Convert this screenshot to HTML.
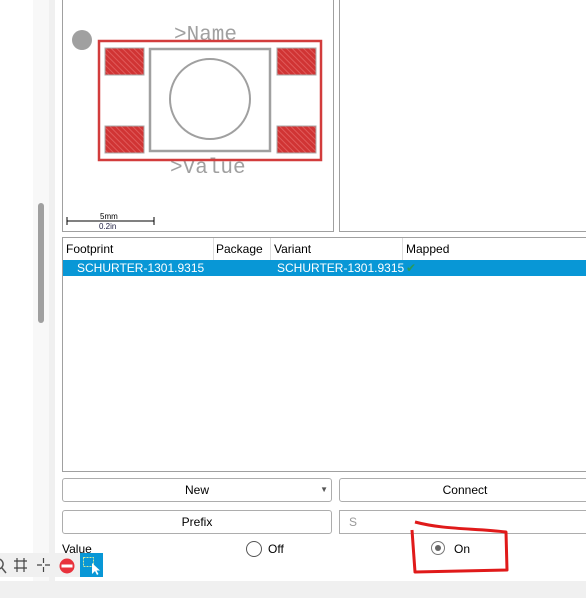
<!DOCTYPE html><html><head><style>
body{margin:0;width:586px;height:598px;overflow:hidden;background:#fff;font-family:"Liberation Sans",sans-serif;font-size:12px;position:relative}
.a{position:absolute}
.btn{position:absolute;border:1px solid #adadad;border-radius:3px;background:#fff;text-align:center;line-height:22px;font-size:12px;color:#000}
</style></head><body>
<div class="a" style="left:33px;top:0;width:16px;height:581px;background:#f8f8f8"></div>
<div class="a" style="left:49px;top:0;width:6px;height:581px;background:#f0f0f0"></div>
<div class="a" style="left:38px;top:203px;width:6px;height:120px;background:#a0a0a0;border-radius:3px"></div>
<div class="a" style="left:62px;top:-2px;width:270px;height:232px;border:1px solid #a0a0a0;background:#fff"></div>
<div class="a" style="left:339px;top:-2px;width:250px;height:232px;border:1px solid #a0a0a0;background:#fff"></div>
<svg class="a" style="left:62px;top:0" width="272" height="232">
<defs><pattern id="h" width="4" height="4" patternUnits="userSpaceOnUse" patternTransform="rotate(-45)"><rect width="4" height="4" fill="#d03434"/><rect width="1" height="4" fill="#e05a5a"/></pattern></defs>
<circle cx="20" cy="40" r="10" fill="#a0a0a0"/>
<text x="112" y="40" font-family="Liberation Mono,monospace" font-size="21" fill="#a0a0a0">&gt;Name</text>
<text x="108" y="173" font-family="Liberation Mono,monospace" font-size="21" fill="#a0a0a0">&gt;Value</text>
<rect x="37" y="41" width="222" height="119" fill="none" stroke="#d23c3c" stroke-width="2.5"/>
<rect x="88" y="49" width="120" height="102" fill="none" stroke="#a0a0a0" stroke-width="2.5"/>
<circle cx="148" cy="99" r="40" fill="none" stroke="#a0a0a0" stroke-width="2"/>
<g fill="url(#h)" stroke="#a8a8a8"><rect x="43" y="48" width="39" height="27"/><rect x="215" y="48" width="39" height="27"/><rect x="43" y="126" width="39" height="27"/><rect x="215" y="126" width="39" height="27"/></g>
<path d="M5 217V225M5 221H92M92 217V225" stroke="#000" fill="none"/>
<text x="38" y="219" font-size="8">5mm</text><text x="37" y="229" font-size="8" fill="#224">0.2in</text>
</svg>
<div class="a" style="left:62px;top:237px;width:530px;height:233px;border:1px solid #a0a0a0;background:#fff"></div>
<div class="a" style="left:63px;top:238px;width:530px;height:22px;line-height:22px">
<span class="a" style="left:3px">Footprint</span><span class="a" style="left:150px;top:0;height:22px;border-left:1px solid #ddd"></span>
<span class="a" style="left:153px">Package</span><span class="a" style="left:207px;top:0;height:22px;border-left:1px solid #ddd"></span>
<span class="a" style="left:211px">Variant</span><span class="a" style="left:339px;top:0;height:22px;border-left:1px solid #ddd"></span>
<span class="a" style="left:343px">Mapped</span></div>
<div class="a" style="left:63px;top:260px;width:530px;height:16px;background:#0897d6;color:#fff;line-height:16px">
<span class="a" style="left:14px">SCHURTER-1301.9315</span><span class="a" style="left:214px">SCHURTER-1301.9315</span><span class="a" style="left:343px;color:#2a9a5a">✔</span></div>
<div class="btn" style="left:62px;top:478px;width:268px;height:22px">New<span class="a" style="right:3px;top:0;font-size:8px;color:#555">▼</span></div>
<div class="btn" style="left:339px;top:478px;width:250px;height:22px">Connect</div>
<div class="btn" style="left:62px;top:510px;width:268px;height:22px">Prefix</div>
<div class="a" style="left:339px;top:510px;border:1px solid #adadad;line-height:22px;color:#999;padding-left:9px;box-sizing:border-box;width:252px;height:24px">S</div>
<div class="a" style="left:62px;top:542px">Value</div>
<div class="a" style="left:246px;top:541px;width:14px;height:14px;border:1px solid #555;border-radius:50%"></div>
<div class="a" style="left:268px;top:542px">Off</div>
<div class="a" style="left:431px;top:541px;width:12px;height:12px;border:1px solid #777;border-radius:50%"><div class="a" style="left:3px;top:3px;width:6px;height:6px;border-radius:50%;background:#666"></div></div>
<div class="a" style="left:454px;top:542px">On</div>
<svg class="a" style="left:405px;top:518px" width="110" height="60"><path d="M10 4C40 12 70 10 101 14L102 52L10 54L7 12" fill="none" stroke="#e01a1a" stroke-width="3" stroke-linejoin="round"/></svg>
<div class="a" style="left:0;top:553px;width:103px;height:24px;background:#f0f0f0"></div>
<svg class="a" style="left:0;top:553px" width="103" height="24">
<path d="M-2 6a5 5 0 1 0 0.1 0M2 15l4 5" stroke="#555" fill="none" stroke-width="1.5"/>
<path d="M14 8H27M14 15H27M17 5V19M24 5V19" stroke="#444" fill="none" stroke-width="1.2"/>
<path d="M37 12H42M45 12H50M43.5 5V10M43.5 14V19" stroke="#444" fill="none" stroke-width="1.2"/>
<circle cx="67" cy="13" r="7.5" fill="#e8323c"/><rect x="61.5" y="11.5" width="11" height="3" fill="#fff"/>
<rect x="80" y="0" width="23" height="24" fill="#0897d6"/>
<rect x="83.5" y="4.5" width="10" height="9" fill="none" stroke="#cfe8a0" stroke-dasharray="2 1"/>
<path d="M92 10V21L95 18L97 22L98.5 21L96.5 17.5H100Z" fill="#fff"/>
</svg>
<div class="a" style="left:0;top:581px;width:586px;height:17px;background:#f0f0f0"></div>
</body></html>
